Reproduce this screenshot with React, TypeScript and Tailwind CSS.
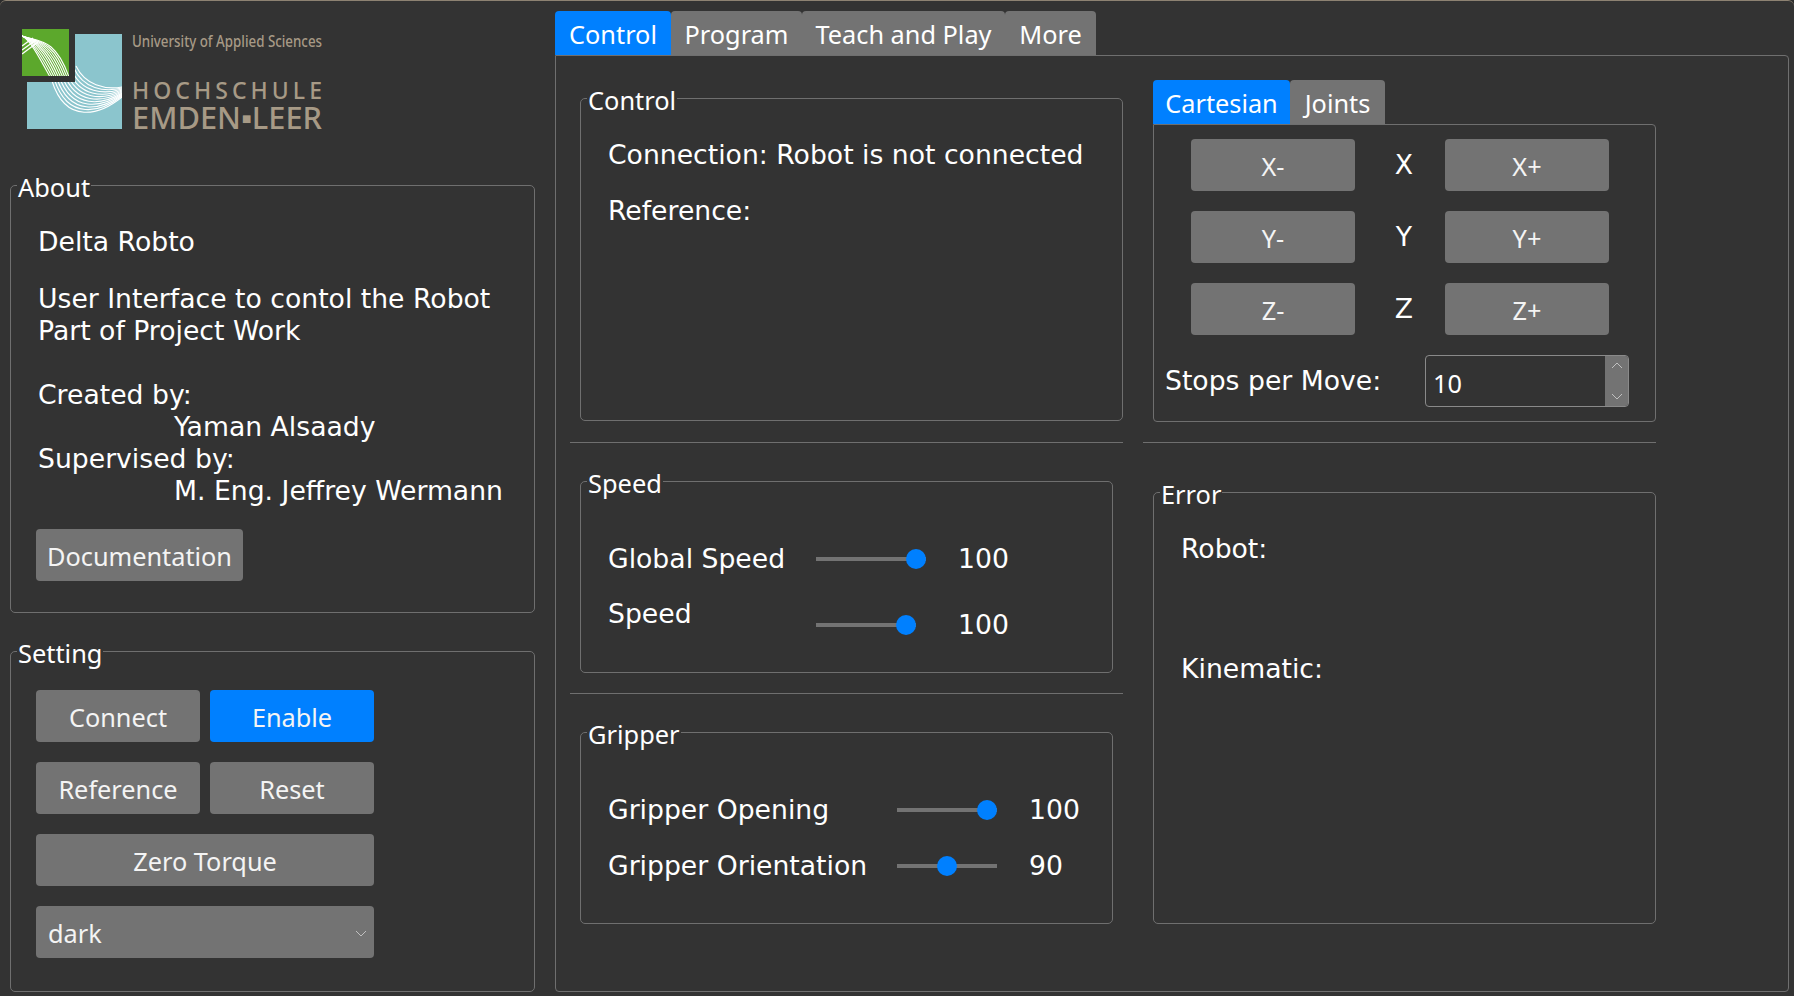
import React from "react";

const ui = "font-['Noto_Sans','Open_Sans',sans-serif]";
const label = "font-['DejaVu_Sans',sans-serif] text-[26.67px] leading-[32px] text-white whitespace-nowrap";

function Group({ title, className, children }: { title: string; className: string; children?: React.ReactNode }) {
  return (
    <div className={`relative border border-[#6f6f6f] rounded-[5px] ${className}`}>
      <span className={`absolute left-[6px] top-[-17px] h-[34px] bg-[#333333] px-px text-[25.4px] leading-[36px] text-white whitespace-nowrap ${ui}`}>
        {title}
      </span>
      {children}
    </div>
  );
}

function Btn({ children, className = "", blue = false }: { children: React.ReactNode; className?: string; blue?: boolean }) {
  return (
    <div
      className={`flex h-[52px] items-center justify-center rounded-[4px] pt-[3px] text-[25.3px] text-[#f4f4f4] whitespace-nowrap ${ui} ${
        blue ? "bg-[#0080ff]" : "bg-[#737373]"
      } ${className}`}
    >
      {children}
    </div>
  );
}

function Tab({ children, active = false, className = "" }: { children: React.ReactNode; active?: boolean; className?: string }) {
  return (
    <div
      className={`flex h-[44px] items-center justify-center rounded-t-[4px] pt-[3px] text-[25.3px] text-white whitespace-nowrap ${ui} ${
        active ? "bg-[#0080ff]" : "bg-[#737373]"
      } ${className}`}
    >
      {children}
    </div>
  );
}

function Slider({ widthClass, leftClass }: { widthClass: string; leftClass: string }) {
  return (
    <div className={`relative flex h-[32px] items-center ${widthClass}`}>
      <div className="h-[4px] w-full bg-[#737373]" />
      <div className={`absolute top-[6px] h-[20px] w-[20px] rounded-full bg-[#0080ff] ${leftClass}`} />
    </div>
  );
}

function Chevron({ up = false }: { up?: boolean }) {
  return (
    <svg width="12" height="7" viewBox="0 0 12 7" fill="none" stroke="#c0c0c0" strokeWidth="1">
      <polyline points={up ? "1,6 6,1 11,6" : "1,1 6,6 11,1"} />
    </svg>
  );
}

function Logo() {
  const blue = Array.from({ length: 11 }, (_, i) => {
    const t = i / 10;
    const l = (a: number, b: number) => (a + (b - a) * t).toFixed(1);
    return `M${l(52, 76)} ${l(81, 66)}C${l(66, 85)} ${l(125, 85)} ${l(100, 105)} ${l(115, 90)} 122 ${l(97, 87)}`;
  });
  const green = Array.from({ length: 10 }, (_, i) => {
    const t = i / 9;
    const l = (a: number, b: number) => (a + (b - a) * t).toFixed(1);
    return `M22 36C${l(30, 40)} ${l(40, 42)} ${l(38, 55)} ${l(55, 38)} ${l(50, 69)} 77`;
  });
  return (
    <svg width="390" height="112" viewBox="10 28 390 112" className="-mb-[10px] block">
      <defs>
        <clipPath id="bl"><rect x="27" y="34" width="95" height="95" /></clipPath>
        <clipPath id="gr"><rect x="22" y="29" width="47" height="47" /></clipPath>
      </defs>
      <rect x="27" y="34" width="95" height="95" fill="#8bc5cd" />
      <g clipPath="url(#bl)" fill="none" stroke="#ffffff" strokeWidth="1.1">
        {blue.map((d) => <path key={d} d={d} />)}
      </g>
      <rect x="16" y="24" width="59" height="58" fill="#333333" />
      <rect x="22" y="29" width="47" height="47" fill="#5ca82c" />
      <g clipPath="url(#gr)" fill="none" stroke="#ffffff" strokeWidth="1.1">
        {green.map((d) => <path key={d} d={d} />)}
        <path d="M22 46L33 38M22 50L36 40M22 54L38 42" strokeWidth="1.4" />
      </g>
      <g fill="#a79a86" fontFamily="'Noto Sans','Open Sans',sans-serif" fontWeight="500">
        <text x="132" y="47" fontSize="15.5" textLength="190" lengthAdjust="spacingAndGlyphs">University of Applied Sciences</text>
        <text x="132" y="99" fontSize="23" textLength="190" lengthAdjust="spacing">HOCHSCHULE</text>
        <text x="132" y="129" fontSize="31" textLength="190" lengthAdjust="spacingAndGlyphs">EMDEN▪LEER</text>
      </g>
    </svg>
  );
}

export default function App() {
  return (
    <div className="h-[996px] w-[1794px] overflow-hidden bg-[#2d2d2d]">
      <div className="flex h-[996px] w-[1794px] rounded-t-[6px] border-t border-[#8d8272] bg-[#333333]">
        {/* left column */}
        <div className="ml-[10px] flex w-[525px] flex-col">
          <div className="mt-[27px]"><Logo /></div>
          <Group title="About" className="mt-[55px] h-[428px] pl-[27px] pt-[40px]">
            <div className={label}>Delta Robto</div>
            <div className={`${label} mt-[25px]`}>User Interface to contol the Robot</div>
            <div className={label}>Part of Project Work</div>
            <div className={`${label} mt-[32px]`}>Created by:</div>
            <div className={`${label} pl-[136px]`}>Yaman Alsaady</div>
            <div className={label}>Supervised by:</div>
            <div className={`${label} pl-[136px]`}>M. Eng. Jeffrey Wermann</div>
            <Btn className="-ml-[2px] mt-[22px] w-[207px]">Documentation</Btn>
          </Group>
          <Group title="Setting" className="mt-[38px] h-[341px] pl-[25px] pt-[38px]">
            <div className="grid w-[338px] grid-cols-2 gap-x-[10px] gap-y-[20px]">
              <Btn>Connect</Btn>
              <Btn blue>Enable</Btn>
              <Btn>Reference</Btn>
              <Btn>Reset</Btn>
              <Btn className="col-span-2">Zero Torque</Btn>
              <div className={`col-span-2 flex h-[52px] items-center justify-between rounded-[4px] bg-[#737373] pl-[12px] pr-[7px] pt-[3px] text-[25.3px] text-[#f4f4f4] ${ui}`}>
                <span>dark</span>
                <Chevron />
              </div>
            </div>
          </Group>
        </div>

        {/* main tabs */}
        <div className="ml-[20px] mt-[10px] flex w-[1234px] flex-col">
          <div className="flex h-[44px]">
            <Tab active className="w-[116px]">Control</Tab>
            <Tab className="w-[131px]">Program</Tab>
            <Tab className="w-[203px]">Teach and Play</Tab>
            <Tab className="w-[91px]">More</Tab>
          </div>
          <div className="flex h-[937px] rounded-b-[4px] rounded-tr-[4px] border border-[#6f6f6f] pl-[14px]">
            {/* column 1 */}
            <div className="flex w-[553px] flex-col pt-[42px]">
              <Group title="Control" className="ml-[10px] h-[323px] w-[543px] pl-[27px] pt-[40px]">
                <div className={label}>Connection: Robot is not connected</div>
                <div className={`${label} mt-[24px]`}>Reference:</div>
              </Group>
              <div className="mt-[21px] h-px bg-[#6f6f6f]" />
              <Group title="Speed" className="ml-[10px] mt-[38px] h-[192px] w-[533px] pl-[27px] pt-[61px]">
                <div className="flex">
                  <div className={`${label} w-[208px]`}>Global Speed</div>
                  <Slider widthClass="w-[110px]" leftClass="left-[90px]" />
                  <div className={`${label} ml-[32px]`}>100</div>
                </div>
                <div className="mt-[23px] flex">
                  <div className={`${label} w-[208px]`}>Speed</div>
                  <div className="mt-[11px]"><Slider widthClass="w-[100px]" leftClass="left-[80px]" /></div>
                  <div className={`${label} ml-[42px] mt-[11px]`}>100</div>
                </div>
              </Group>
              <div className="mt-[20px] h-px bg-[#6f6f6f]" />
              <Group title="Gripper" className="ml-[10px] mt-[38px] h-[192px] w-[533px] pl-[27px] pt-[61px]">
                <div className="flex">
                  <div className={`${label} w-[289px]`}>Gripper Opening</div>
                  <Slider widthClass="w-[100px]" leftClass="left-[80px]" />
                  <div className={`${label} ml-[32px]`}>100</div>
                </div>
                <div className="mt-[24px] flex">
                  <div className={`${label} w-[289px]`}>Gripper Orientation</div>
                  <Slider widthClass="w-[100px]" leftClass="left-[40px]" />
                  <div className={`${label} ml-[32px]`}>90</div>
                </div>
              </Group>
            </div>

            {/* column 2 */}
            <div className="ml-[20px] flex w-[513px] flex-col pt-[24px]">
              <div className="ml-[10px] flex h-[44px]">
                <Tab active className="w-[137px]">Cartesian</Tab>
                <Tab className="w-[95px]">Joints</Tab>
              </div>
              <div className="ml-[10px] h-[298px] rounded-b-[4px] rounded-tr-[4px] border border-[#6f6f6f] pt-[14px]">
                <div className="ml-[37px] grid w-[418px] grid-cols-[164px_90px_164px] gap-y-[20px]">
                  <Btn>X-</Btn>
                  <div className={`${label} flex items-center justify-center pl-[8px]`}>X</div>
                  <Btn>X+</Btn>
                  <Btn>Y-</Btn>
                  <div className={`${label} flex items-center justify-center pl-[8px]`}>Y</div>
                  <Btn>Y+</Btn>
                  <Btn>Z-</Btn>
                  <div className={`${label} flex items-center justify-center pl-[8px]`}>Z</div>
                  <Btn>Z+</Btn>
                </div>
                <div className="mt-[20px] flex items-center pl-[11px]">
                  <div className={`${label} w-[260px]`}>Stops per Move:</div>
                  <div className="flex h-[52px] w-[204px] overflow-hidden rounded-[4px] border border-[#8a8a8a]">
                    <div className={`flex-1 pl-[7px] pt-[2px] text-[25.3px] leading-[50px] text-white ${ui}`}>10</div>
                    <div className="flex w-[23px] flex-col items-center justify-between bg-[#737373] py-[6px]">
                      <Chevron up />
                      <Chevron />
                    </div>
                  </div>
                </div>
              </div>
              <div className="mt-[20px] h-px bg-[#6f6f6f]" />
              <Group title="Error" className="ml-[10px] mt-[49px] h-[432px] pl-[27px] pt-[40px]">
                <div className={label}>Robot:</div>
                <div className={`${label} mt-[88px]`}>Kinematic:</div>
              </Group>
            </div>
          </div>
        </div>
      </div>
    </div>
  );
}
